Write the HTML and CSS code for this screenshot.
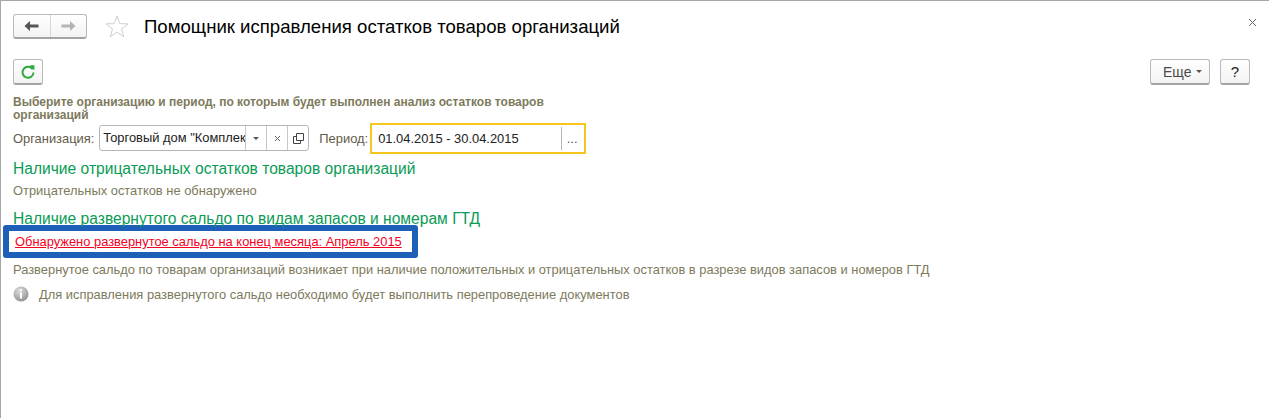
FILE: index.html
```html
<!DOCTYPE html>
<html lang="ru">
<head>
    <meta charset="UTF-8">
    <title>Помощник исправления остатков товаров организаций</title>
    <link rel="stylesheet" href="styles.css">
</head>
<body>
    <div class="window">
        <!-- заголовок -->
        <div class="title-bar">
            <div class="btn nav-group">
                <span class="nav-btn">
                    <svg width="16" height="12" viewBox="0 0 16 12"><path d="M0.5 6 L6 1 V4.5 H14.5 V7.5 H6 V11 Z" fill="#555"/></svg>
                </span>
                <span class="nav-btn nav-next">
                    <svg width="16" height="12" viewBox="0 0 16 12"><path d="M15.5 6 L10 1 V4.5 H1.5 V7.5 H10 V11 Z" fill="#b4b4b4"/></svg>
                </span>
            </div>
            <svg class="star" width="24" height="23" viewBox="0 0 24 23"><path d="M12 1 L14.8 8.6 L23 8.9 L16.5 13.9 L18.8 21.8 L12 17.2 L5.2 21.8 L7.5 13.9 L1 8.9 L9.2 8.6 Z" fill="none" stroke="#cfcfcf"/></svg>
            <h1 class="title">Помощник исправления остатков товаров организаций</h1>
            <svg class="close" width="9" height="9" viewBox="0 0 9 9"><path d="M1 1 L8 8 M8 1 L1 8" stroke="#666" fill="none"/></svg>
        </div>

        <!-- командная панель -->
        <div class="toolbar">
            <div class="btn refresh-btn">
                <svg width="16" height="16" viewBox="0 0 16 16"><path d="M12.6 5.2 A5.5 5.5 0 1 0 13.5 8.5" fill="none" stroke="#2fa83c" stroke-width="2"/><path d="M9.6 1.2 L14.4 1.2 L14.4 6.6 Z" fill="#2fa83c"/></svg>
            </div>
            <div class="toolbar-right">
                <div class="btn more-btn">Еще <span class="caret"></span></div>
                <div class="btn help-btn">?</div>
            </div>
        </div>

        <div class="content">
            <div class="hint">Выберите организацию и период, по которым будет выполнен анализ остатков товаров организаций</div>

            <div class="filter-row">
                <label class="label">Организация:</label>
                <div class="field org-field">
                    <span class="field-text">Торговый дом "Комплексный"</span>
                    <span class="field-btn"><span class="caret"></span></span>
                    <span class="field-btn">
                        <svg width="7" height="7" viewBox="0 0 7 7"><path d="M1 1 L6 6 M6 1 L1 6" stroke="#666" fill="none"/></svg>
                    </span>
                    <span class="field-btn">
                        <svg width="11" height="11" viewBox="0 0 11 11"><path d="M3.5 0.5 H10.5 V7.5 H3.5 Z M0.5 3.5 H3.5 M0.5 3.5 V10.5 H7.5 V7.5" fill="none" stroke="#444"/></svg>
                    </span>
                </div>
                <label class="label period-label">Период:</label>
                <div class="period-field">
                    <span class="period-text">01.04.2015 - 30.04.2015</span>
                    <span class="period-btn">...</span>
                </div>
            </div>

            <h2 class="section-title section-first">Наличие отрицательных остатков товаров организаций</h2>
            <p class="note note-first">Отрицательных остатков не обнаружено</p>

            <h2 class="section-title section-second">Наличие развернутого сальдо по видам запасов и номерам ГТД</h2>
            <div class="alert-box">
                <a class="alert-link" href="#">Обнаружено развернутое сальдо на конец месяца: Апрель 2015</a>
            </div>
            <p class="note note-balance">Развернутое сальдо по товарам организаций возникает при наличие положительных и отрицательных остатков в разрезе видов запасов и номеров ГТД</p>
            <div class="info-row">
                <svg width="16" height="16" viewBox="0 0 16 16">
                    <defs>
                        <radialGradient id="infoFill" cx="40%" cy="30%" r="75%">
                            <stop offset="0" stop-color="#dedede"/>
                            <stop offset="1" stop-color="#8f8f8f"/>
                        </radialGradient>
                    </defs>
                    <circle cx="8" cy="8" r="7.5" fill="url(#infoFill)"/>
                    <rect x="7" y="3" width="2" height="2" fill="#fff"/>
                    <rect x="7" y="6.5" width="2" height="6" fill="#fff"/>
                </svg>
                <span>Для исправления развернутого сальдо необходимо будет выполнить перепроведение документов</span>
            </div>
        </div>
    </div>
</body>
</html>
```

FILE: styles.css
```css
* {
    margin: 0;
    padding: 0;
    box-sizing: border-box;
}

html, body {
    width: 100%;
    height: 100%;
    overflow: hidden;
    background: #ffffff;
    font-family: 'Liberation Sans', Arial, sans-serif;
    font-size: 12.9px;
}

.window {
    height: 418px;
    border-top: 1px solid #a6a6a6;
    border-left: 1px solid #a6a6a6;
    padding: 12px 20px 0 12px;
}

/* кнопки */
.btn {
    display: flex;
    align-items: center;
    justify-content: center;
    background: linear-gradient(#ffffff, #f3f3f3);
    border: 1px solid #b9b9b9;
    border-bottom: 2px solid #a3a3a3;
    border-radius: 3px;
}

/* заголовок */
.title-bar {
    display: flex;
    align-items: center;
    height: 26px;
}

.nav-group {
    width: 74px;
    height: 25px;
}

.nav-btn {
    flex: 1;
    height: 100%;
    display: flex;
    align-items: center;
    justify-content: center;
}

.nav-next {
    border-left: 1px solid #d6d6d6;
}

.star {
    margin-left: 18px;
    flex: none;
}

.title {
    margin-left: 15px;
    margin-top: 1px;
    font-size: 18.6px;
    font-weight: normal;
    color: #000000;
}

.close {
    margin-left: auto;
    margin-top: -7px;
    margin-right: -8px;
}

/* командная панель */
.toolbar {
    display: flex;
    justify-content: space-between;
    margin-top: 20px;
    height: 26px;
}

.refresh-btn {
    width: 30px;
    height: 26px;
}

.toolbar-right {
    display: flex;
    gap: 10px;
    margin-right: -1px;
}

.more-btn {
    width: 60px;
    height: 26px;
    justify-content: flex-start;
    padding-left: 12px;
    font-size: 14px;
    color: #4a4a4a;
    gap: 4px;
}

.help-btn {
    width: 30px;
    height: 26px;
    font-size: 15px;
    color: #222222;
}

.caret {
    display: inline-block;
    border-left: 3px solid transparent;
    border-right: 3px solid transparent;
    border-top: 3px solid #555555;
}

/* содержимое */
.content {
    margin-top: 11px;
}

.hint {
    width: 545px;
    font-size: 12px;
    line-height: 13px;
    font-weight: bold;
    color: #7d7a5c;
}

.filter-row {
    display: flex;
    align-items: center;
    height: 32px;
}

.label {
    color: #5f5c48;
}

.field {
    display: flex;
    height: 26px;
    margin-left: 5px;
    border: 1px solid #b5b5b5;
    border-radius: 3px;
    color: #222222;
}

.org-field {
    flex: none;
    width: 210px;
}

.field-text {
    width: 145px;
    flex: none;
    padding: 0 3px;
    line-height: 24px;
    overflow: hidden;
    white-space: nowrap;
}

.field-btn {
    flex: 1;
    display: flex;
    align-items: center;
    justify-content: center;
    border-left: 1px solid #c9c9c9;
}

.period-label {
    margin-left: 10px;
}

.period-field {
    display: flex;
    align-items: center;
    width: 216px;
    height: 31px;
    margin-left: 2px;
    border: 2px solid #f7c61c;
    padding: 2px;
}

.period-text {
    flex: 1;
    padding-left: 4px;
    color: #222222;
}

.period-btn {
    width: 21px;
    height: 100%;
    border-left: 1px solid #b5b5b5;
    text-align: center;
    line-height: 24px;
    color: #555555;
}

.section-title {
    font-size: 15.6px;
    font-weight: normal;
    color: #0a9b55;
    line-height: 18px;
}

.section-first {
    margin-top: 6px;
}

.section-second {
    margin-top: 12px;
}

.note {
    color: #7d7a5c;
    line-height: 14px;
}

.note-first {
    margin-top: 6px;
}

.alert-box {
    display: flex;
    align-items: center;
    width: 415px;
    height: 33px;
    margin-left: -10px;
    margin-top: -3px;
    padding-left: 6px;
    border: 6px solid #1e5fb8;
    border-radius: 3px;
    background: #ffffff;
}

.alert-link {
    color: #f5001e;
}

.note-balance {
    margin-top: 5px;
}

.info-row {
    display: flex;
    align-items: center;
    gap: 10px;
    margin-top: 9px;
    color: #7d7a5c;
}
```
